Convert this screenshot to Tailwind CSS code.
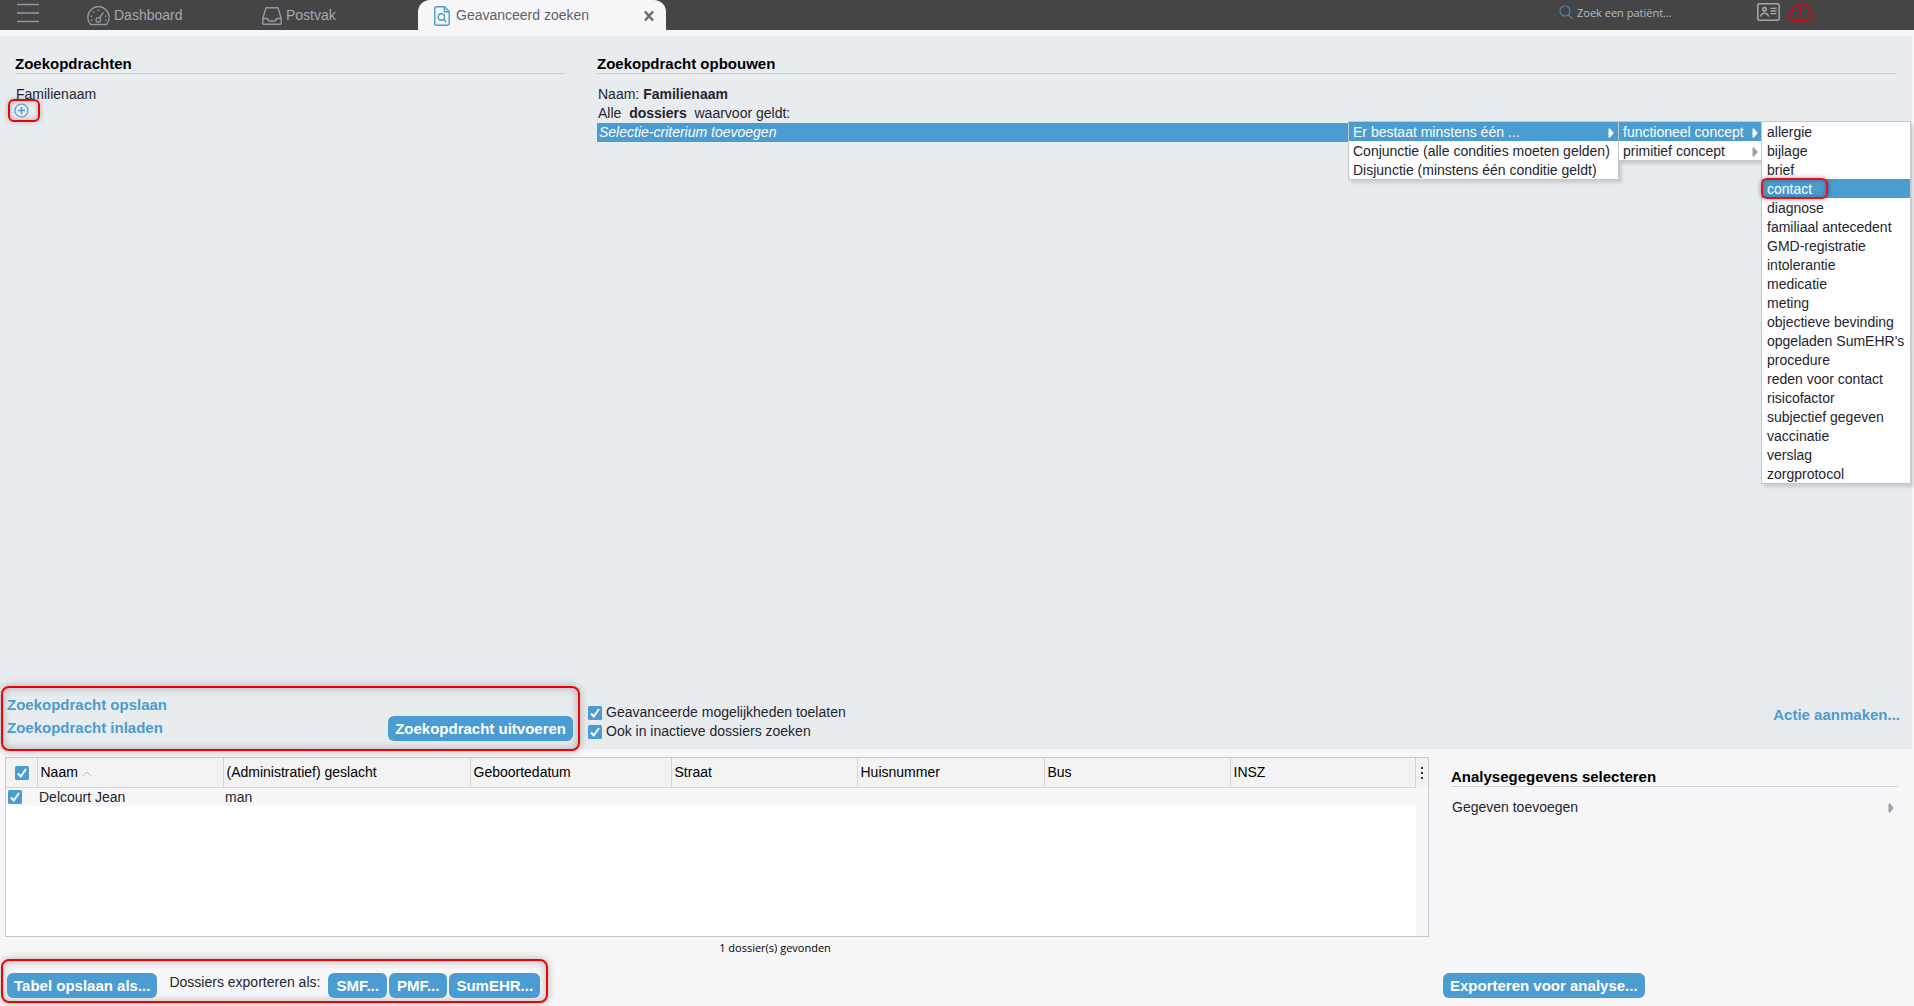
<!DOCTYPE html>
<html lang="nl">
<head>
<meta charset="utf-8">
<title>Geavanceerd zoeken</title>
<script src="https://cdn.jsdelivr.net/npm/@tailwindcss/browser@4"></script>
</head>
<body class="min-h-screen flex flex-col bg-[#f7f7f9] font-['Liberation_Sans',sans-serif] text-sm leading-[19px] text-[#24242e]">
<svg class="hidden" aria-hidden="true">
  <symbol id="arrow" viewBox="0 0 6 10"><path d="M0.5 0.5 L2 0.5 L5.7 5 L2 9.5 L0.5 9.5 Z" fill="currentColor"/></symbol>
  <symbol id="check" viewBox="0 0 14 14"><rect width="14" height="14" rx="1.5" fill="#4b9cd0"/><path d="M3 7.5l2.800 3L11 3" fill="none" stroke="#fff" stroke-width="2"/></symbol>
</svg>

<header class="flex h-[30px] items-center bg-[#454545] text-[#a0a9b5]">
  <button class="ml-[17px] mr-[48px] mb-[5px] shrink-0" aria-label="Menu">
    <svg class="w-[22px] h-[20px]" viewBox="0 0 22 20" fill="none" stroke="#8e98a5" stroke-width="1.3"><path d="M0 1.500h22M0 10h22M0 18.500h22"/></svg>
  </button>
  <nav class="flex h-full flex-1 items-center">
    <a href="#" class="flex w-[175px] items-center gap-1 pt-px">
      <svg class="w-[23px] h-[20px]" viewBox="0 0 23 20" fill="none" stroke="#939ba7" stroke-width="1.3" stroke-linejoin="round"><path d="M3.500 18.500 A10.700 10.700 0 1 1 19.500 18.500 Z"/><circle cx="11.3" cy="14" r="2.3"/><path d="M12.500 12 L16.400 6.500"/><path d="M11.500 3.600v1.500M6.400 5.600l.9.9M3.600 10.200h1.500M3.800 14.300h1.500M18 14.300h1.500M18 10.200h1.200" stroke-width="1.5"/></svg>
      Dashboard
    </a>
    <a href="#" class="flex w-[156px] items-center gap-1 pt-px">
      <svg class="w-[20px] h-[18px]" viewBox="0 0 20 18" fill="none" stroke="#939ba7" stroke-width="1.4" stroke-linejoin="round"><path d="M4 .8 H16 L19.200 11.500 V16 Q19.200 17.200 18 17.200 H2 Q.8 17.200 .8 16 V11.500 Z"/><path d="M.8 11.500 H5.200 L6.800 14 H13.200 L14.800 11.500 H19.200"/></svg>
      Postvak
    </a>
    <div class="flex h-full w-[248px] items-center rounded-t-xl bg-[#f7f7f9] pl-4 pr-[11px] pt-px text-[#5a6371]">
      <svg class="mr-1.5 w-4 h-5" viewBox="0 0 16 20" fill="none" stroke="#4b9cd0" stroke-width="1.400" stroke-linejoin="round"><path d="M2.200.8H10.500L15.200 5.500V17.800Q15.200 19.200 13.800 19.200H2.200Q.8 19.200.8 17.800V2.200Q.8.8 2.200.8Z"/><path d="M10.300 1V5.700H15"/><circle cx="7.400" cy="11" r="3.200"/><path d="M9.700 13.400 L12.200 16.200"/></svg>
      <a href="#" class="flex-1">Geavanceerd zoeken</a>
      <button class="flex" aria-label="Sluiten"><svg class="w-3 h-3" viewBox="0 0 12 12" stroke="#6e6e6e" stroke-width="2.6"><path d="M2 1.500l8 9M10 1.500l-8 9"/></svg></button>
    </div>
  </nav>
  <label class="mr-[58px] mb-1.5 flex items-center gap-1">
    <svg class="w-[14px] h-[15px]" viewBox="0 0 14 15" fill="none" stroke="#4b86b0" stroke-width="1.2"><circle cx="6" cy="6" r="5"/><path d="M9.600 9.800L13.500 14"/></svg>
    <input class="w-[122px] bg-transparent text-[11px] font-['Open_Sans',sans-serif] text-[#b4bcc8] placeholder-[#b4bcc8] outline-none" placeholder="Zoek een patiënt..." aria-label="Zoek een patiënt">
  </label>
  <div class="mr-[101px] mb-1.5 flex items-center gap-2">
    <svg class="w-[23px] h-[18px]" viewBox="0 0 23 18" fill="none" stroke="#a8a8a8" stroke-width="1.500"><rect x=".8" y=".8" width="21.400" height="16.400" rx="1.500"/><circle cx="7.500" cy="6.300" r="1.800"/><path d="M3.500 13.500Q4 10.200 7.500 10.200T11.500 13.500M13.500 5.400h6M13.500 8h6M13.500 10.600h6" stroke-width="1.400"/></svg>
    <svg class="w-[25px] h-[19px]" viewBox="0 0 25 19" fill="none" stroke="#d8000f" stroke-width="1.400" stroke-linejoin="round"><path d="M5.500 17.800C2.700 17.800.8 15.800.8 13.400.8 11.200 2.400 9.200 4.400 8.700 4 5.600 5 3 8.200 3 9.800 1.500 11.500.9 14 .9 17.600.9 19.600 2.400 20.400 4.600 22 5.200 22 7.400 21.600 8.800 23.400 9.800 24.200 11.600 24.200 13.400 24.200 16 22.200 17.800 19.600 17.800Z"/><path d="M12.500 5v6.500M12.500 12.900v1.600"/></svg>
  </div>
</header>

<main class="mt-1.5 mr-[2px] flex flex-1 flex-col">
  <section class="relative flex flex-1 flex-col bg-[#e8ecef]">
    <div class="flex flex-1 items-start">
      <div class="w-[597px] shrink-0 pl-[15px] pr-8 pt-[18px]">
        <h2 class="h-5 border-b border-[#cbcfd3] text-[15px] leading-[19px] font-bold text-black">Zoekopdrachten</h2>
        <p class="mt-[11px] pl-px">Familienaam</p>
        <div class="-ml-[7px] flex h-[23px] w-8 -mt-[5px] items-center rounded-md border-2 border-[#f00000] pl-1 shadow-[0_0_5px_#0004,inset_0_0_5px_#0004]">
          <button class="flex" aria-label="Toevoegen"><svg class="w-[15px] h-[15px]" viewBox="0 0 15 15" fill="none" stroke="#4b9cd0" stroke-width="1.2"><circle cx="7.5" cy="7.5" r="6.5"/><path d="M7.500 4v7M4 7.500h7" stroke-width="1.6"/></svg></button>
        </div>
      </div>
      <div class="flex-1 pr-[15px] pt-[18px]">
        <h2 class="h-5 border-b border-[#cbcfd3] text-[15px] leading-[19px] font-bold text-black">Zoekopdracht opbouwen</h2>
        <p class="mt-[11px] pl-px">Naam: <b>Familienaam</b></p>
        <p class="pl-px">Alle&nbsp; <b>dossiers</b>&nbsp; waarvoor geldt:</p>
        <div class="flex h-[19px] bg-[#4b9cd0] pl-0.5 text-white"><button class="italic">Selectie-criterium toevoegen</button></div>
      </div>
    </div>

    <div class="absolute right-px top-[85px] flex items-start leading-[21px]">
      <ul class="w-[271px] border border-[#c3c8cd] bg-white shadow-[3px_3px_3px_#0002] *:h-[19px]">
        <li class="bg-[#4b9cd0] text-white"><button class="flex w-full items-center justify-between px-1">Er bestaat minstens één ...<svg class="w-1.5 h-2.5"><use href="#arrow"/></svg></button></li>
        <li><button class="px-1 whitespace-nowrap">Conjunctie (alle condities moeten gelden)</button></li>
        <li><button class="px-1 whitespace-nowrap">Disjunctie (minstens één conditie geldt)</button></li>
      </ul>
      <ul class="-ml-px w-[144px] border border-[#c3c8cd] bg-white shadow-[3px_3px_3px_#0002] *:h-[19px]">
        <li class="bg-[#4b9cd0] text-white"><button class="flex w-full items-center justify-between pl-1 pr-[3px]">functioneel concept<svg class="w-1.5 h-2.5"><use href="#arrow"/></svg></button></li>
        <li><button class="flex w-full items-center justify-between pl-1 pr-[3px]">primitief concept<svg class="w-1.5 h-2.5 text-[#9aa3ad]"><use href="#arrow"/></svg></button></li>
      </ul>
      <ul class="-ml-px w-[150px] border border-[#c3c8cd] bg-white shadow-[3px_3px_3px_#0002] *:h-[19px] *:px-[5px] *:whitespace-nowrap">
        <li><button>allergie</button></li>
        <li><button>bijlage</button></li>
        <li><button>brief</button></li>
        <li class="relative bg-[#4b9cd0] text-white"><button>contact</button><span class="absolute -left-px -top-px h-[21px] w-[67px] rounded-md border-2 border-[#e8101c] shadow-[0_0_5px_#0006,inset_0_0_5px_#0004]"></span></li>
        <li><button>diagnose</button></li>
        <li><button>familiaal antecedent</button></li>
        <li><button>GMD-registratie</button></li>
        <li><button>intolerantie</button></li>
        <li><button>medicatie</button></li>
        <li><button>meting</button></li>
        <li><button>objectieve bevinding</button></li>
        <li><button>opgeladen SumEHR's</button></li>
        <li><button>procedure</button></li>
        <li><button>reden voor contact</button></li>
        <li><button>risicofactor</button></li>
        <li><button>subjectief gegeven</button></li>
        <li><button>vaccinatie</button></li>
        <li><button>verslag</button></li>
        <li><button>zorgprotocol</button></li>
      </ul>
    </div>

    <div class="flex h-[63px] items-start">
      <div class="ml-px flex h-[65px] w-[579px] shrink-0 items-start justify-between rounded-lg border-2 border-[#f00000] pl-1 pr-[5px] shadow-[0_0_8px_#0004,inset_0_0_8px_#0004]">
        <div class="flex flex-col items-start gap-1 pt-[7px] text-[15px] font-bold text-[#4b9cd0]">
          <a href="#">Zoekopdracht opslaan</a>
          <a href="#">Zoekopdracht inladen</a>
        </div>
        <button class="mt-[28px] h-[25px] rounded-md bg-[#4b9cd0] px-[7px] text-[15px] font-bold text-white">Zoekopdracht uitvoeren</button>
      </div>
      <div class="flex-1 pl-2 pt-[17px]">
        <label class="flex items-center gap-1"><input type="checkbox" checked class="sr-only"><svg class="w-[14px] h-[14px]"><use href="#check"/></svg>Geavanceerde mogelijkheden toelaten</label>
        <label class="flex items-center gap-1"><input type="checkbox" checked class="sr-only"><svg class="w-[14px] h-[14px]"><use href="#check"/></svg>Ook in inactieve dossiers zoeken</label>
      </div>
      <a href="#" class="mr-3 mt-[19px] text-[15px] font-bold text-[#4b9cd0]">Actie aanmaken...</a>
    </div>
  </section>

  <section class="flex h-[257px] pt-2">
    <div class="w-[1429px] shrink-0 pl-[5px]">
      <div class="flex h-[180px] items-start border border-[#c8c9cc] bg-white">
        <table class="w-full table-fixed text-left text-black">
          <colgroup><col class="w-[31px]"><col class="w-[186px]"><col class="w-[247px]"><col class="w-[201px]"><col class="w-[186px]"><col class="w-[187px]"><col class="w-[186px]"><col></colgroup>
          <thead>
            <tr class="h-[29px] bg-[#f3f3f4] *:border-b *:border-r *:border-[#d5d5d8] *:p-0 *:font-normal *:pt-px *:pl-[3px]">
              <th><label class="flex pl-1.5"><input type="checkbox" checked class="sr-only" aria-label="Alles selecteren"><svg class="w-[14px] h-[14px]"><use href="#check"/></svg></label></th>
              <th>Naam <svg class="inline w-[10px] h-[6px]" viewBox="0 0 10 6" fill="none" stroke="#b8b8b8"><path d="M.5 5.500L5 1l4.500 4.500"/></svg></th>
              <th>(Administratief) geslacht</th><th>Geboortedatum</th><th>Straat</th><th>Huisnummer</th><th>Bus</th><th>INSZ</th>
            </tr>
          </thead>
          <tbody>
            <tr class="h-[18px] bg-[#f7f7f9] leading-[18px] text-[#24242e] *:py-0 *:pr-0 *:pl-0.5">
              <td><label class="flex"><input type="checkbox" checked class="sr-only" aria-label="Delcourt Jean"><svg class="w-[14px] h-[14px]"><use href="#check"/></svg></label></td>
              <td>Delcourt Jean</td><td>man</td><td></td><td></td><td></td><td></td><td></td>
            </tr>
          </tbody>
        </table>
        <div class="flex h-full w-[12px] shrink-0 items-start justify-center bg-[#f7f7f9]">
          <button class="flex h-[29px] w-full items-center justify-center bg-[#f3f3f4]" aria-label="Kolommen"><svg class="w-0.5 h-3" viewBox="0 0 2 12" fill="#333"><path d="M0 0h2v2H0zM0 5h2v2H0zM0 10h2v2H0z"/></svg></button>
        </div>
      </div>
      <p class="mt-px pl-[116px] text-center text-[11px] leading-5 font-['Open_Sans',sans-serif] text-black">1 dossier(s) gevonden</p>
      <div class="-ml-1 mt-px flex h-[44px] w-[547px] items-start rounded-lg border-2 border-[#f00000] px-1 pt-3 whitespace-nowrap shadow-[0_0_8px_#0004,inset_0_0_8px_#0004]">
        <button class="h-[25px] rounded-md bg-[#4b9cd0] px-[7px] text-[15px] font-bold text-white">Tabel opslaan als...</button>
        <span class="ml-3 mr-2">Dossiers exporteren als:</span>
        <div class="flex gap-0.5">
          <button class="h-[25px] rounded-md bg-[#4b9cd0] px-2 text-[15px] font-bold text-white">SMF...</button>
          <button class="h-[25px] rounded-md bg-[#4b9cd0] px-2 text-[15px] font-bold text-white">PMF...</button>
          <button class="h-[25px] rounded-md bg-[#4b9cd0] px-[7px] text-[15px] font-bold text-white">SumEHR...</button>
        </div>
      </div>
    </div>
    <div class="flex flex-1 flex-col items-start pb-2 pl-[14px] pr-[14px] pt-[10px]">
      <div class="w-full pl-2">
        <h2 class="h-5 border-b border-[#d5d6da] text-[15px] leading-[19px] font-bold text-black">Analysegegevens selecteren</h2>
        <button class="mt-[11px] flex w-full items-center justify-between pl-px pr-1">Gegeven toevoegen<svg class="w-1.5 h-2.5 text-[#9aa3ad]"><use href="#arrow"/></svg></button>
      </div>
      <button class="mt-auto h-[25px] rounded-md bg-[#4b9cd0] px-[7px] text-[15px] font-bold text-white">Exporteren voor analyse...</button>
    </div>
  </section>
</main>
</body>
</html>
